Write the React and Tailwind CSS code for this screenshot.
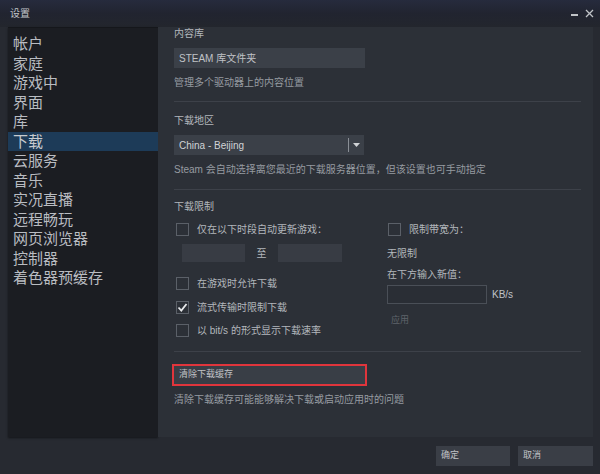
import React from 'react';

const navItems = ['帐户', '家庭', '游戏中', '界面', '库', '下载', '云服务', '音乐', '实况直播', '远程畅玩', '网页浏览器', '控制器', '着色器预缓存'];

const CheckBox = ({ checked }) => (
  <span className="w-[13px] h-[13px] border border-[#5b6068] flex items-center justify-center shrink-0">
    {checked && (
      <svg width="11" height="11" viewBox="0 0 11 11">
        <path d="M1.5 5.5 L4.3 8.5 L9.5 2" fill="none" stroke="#e8eaec" strokeWidth="1.8" />
      </svg>
    )}
  </span>
);

const CheckRow = ({ label, checked, className }) => (
  <div className={`flex items-center h-[14px] ${className}`}>
    <CheckBox checked={checked} />
    <span className="ml-[8px] text-[10px] text-[#b3b7bc]">{label}</span>
  </div>
);

export default function App() {
  return (
    <div className="w-[600px] h-[474px] bg-[#272a31] flex flex-col font-['Liberation_Sans','Noto_Sans_CJK_SC',sans-serif] overflow-hidden">
      {/* title bar */}
      <div className="h-[27px] flex items-center justify-between px-[10px] bg-gradient-to-b from-[#262b3d] via-[#212430] to-[#23262d]">
        <span className="text-[10px] text-[#c0c3c7]">设置</span>
        <div className="flex items-end gap-[7px] mr-[-4px]">
          <span className="w-[7px] h-[2px] bg-[#c0c3c7] mb-[2px]" />
          <svg width="9" height="9" viewBox="0 0 9 9">
            <path d="M1 1 L8 8 M8 1 L1 8" stroke="#c0c3c7" strokeWidth="1.3" />
          </svg>
        </div>
      </div>

      {/* body */}
      <div className="h-[410px] flex pl-[8px] pr-[7px]">
        <div className="w-[150px] bg-[#1b1d22] pt-[6px] border-t border-[#15171b] shadow-[0_1px_2px_rgba(0,0,0,0.5)]">
          {navItems.map((item) => (
            <div
              key={item}
              className={`h-[19.5px] leading-[19.5px] pl-[5px] text-[15px] text-[#b9bcc1] ${item === '下载' ? 'bg-[#1d3b58] text-[#c8cbcf]' : ''}`}
            >
              {item}
            </div>
          ))}
        </div>

        <div className="flex-1 bg-[#2c3037] pl-[16px] pr-[12px]">
          <div className="h-[14px] leading-[14px] text-[10px] text-[#b3b7bc]">内容库</div>
          <div className="mt-[7px] w-[191px] h-[20px] bg-[#3b4048] flex items-center pl-[5px] text-[10px] text-[#c0c3c7]">STEAM 库文件夹</div>
          <div className="mt-[8px] h-[14px] leading-[14px] text-[10px] text-[#969ba1]">管理多个驱动器上的内容位置</div>
          <div className="mt-[11px] h-px bg-[#3d4149]" />

          <div className="mt-[12px] h-[14px] leading-[14px] text-[10px] text-[#b3b7bc]">下载地区</div>
          <div className="mt-[7px] w-[190px] h-[20px] bg-[#3b4048] flex items-center text-[10px] text-[#d0d3d6]">
            <span className="flex-1 pl-[5px]">China - Beijing</span>
            <span className="w-px h-[14px] bg-[#8a8f96]" />
            <span className="w-[15px] flex justify-center">
              <svg width="7" height="4" viewBox="0 0 7 4"><path d="M0 0 L7 0 L3.5 4 Z" fill="#d0d3d6" /></svg>
            </span>
          </div>
          <div className="mt-[8px] h-[14px] leading-[14px] text-[10px] text-[#969ba1]">Steam 会自动选择离您最近的下载服务器位置，但该设置也可手动指定</div>
          <div className="mt-[12px] h-px bg-[#3d4149]" />

          <div className="mt-[10px] h-[14px] leading-[14px] text-[10px] text-[#b3b7bc]">下载限制</div>

          <div className="flex">
            <div className="w-[212px] pl-[2px]">
              <CheckRow className="mt-[8px]" label="仅在以下时段自动更新游戏：" />
              <div className="mt-[8px] flex items-center h-[18px] pl-[6px]">
                <span className="w-[63px] h-[18px] bg-[#383c44]" />
                <span className="w-[33px] text-center text-[10px] text-[#b3b7bc]">至</span>
                <span className="w-[64px] h-[18px] bg-[#383c44]" />
              </div>
              <CheckRow className="mt-[14px]" label="在游戏时允许下载" />
              <CheckRow className="mt-[10px]" label="流式传输时限制下载" checked />
              <CheckRow className="mt-[9px]" label="以 bit/s 的形式显示下载速率" />
            </div>
            <div className="pl-[1px]">
              <CheckRow className="mt-[8px] pl-[1px]" label="限制带宽为：" />
              <div className="mt-[11px] h-[14px] leading-[14px] text-[10px] text-[#b3b7bc]">无限制</div>
              <div className="mt-[7px] h-[14px] leading-[14px] text-[10px] text-[#b3b7bc]">在下方输入新值：</div>
              <div className="mt-[3px] flex items-center">
                <span className="w-[100px] h-[19px] border border-[#4a4f57] bg-[#2a2e35]" />
                <span className="ml-[5px] text-[10px] text-[#c0c3c7]">KB/s</span>
              </div>
              <div className="mt-[8px] w-[54px] h-[16px] pl-[4px] leading-[16px] text-[9px] text-[#5f646b]">应用</div>
            </div>
          </div>

          <div className="mt-[14px] h-px bg-[#3d4149]" />
          <div className="mt-[12px] ml-[-2px] w-[195px] h-[22px] border-2 border-[#e0353c] bg-[#393e46] flex items-center pl-[5px] text-[9px] text-[#c0c3c7]">清除下载缓存</div>
          <div className="mt-[7px] h-[14px] leading-[14px] text-[10px] text-[#969ba1]">清除下载缓存可能能够解决下载或启动应用时的问题</div>
        </div>
      </div>

      {/* footer */}
      <div className="flex-1 flex items-center justify-end gap-[8px] pr-[7px]">
        <button className="w-[74px] h-[20px] bg-[#3a3e46] text-left pl-[5px] text-[9px] text-[#c0c3c7]">确定</button>
        <button className="w-[75px] h-[20px] bg-[#3a3e46] text-left pl-[5px] text-[9px] text-[#c0c3c7]">取消</button>
      </div>
    </div>
  );
}
